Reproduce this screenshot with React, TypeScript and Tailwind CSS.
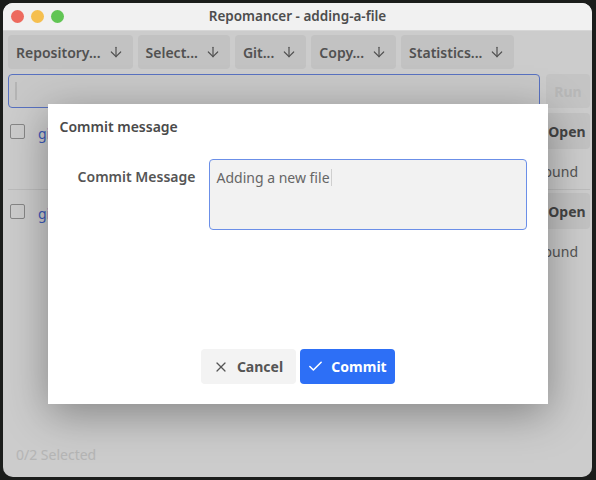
import { ArrowDown, X, Check } from "lucide-react";

const ToolButton = ({ label }: { label: string }) => {
  return (
    <button className="flex h-[34px] items-center gap-[7px] rounded-[4px] bg-[#f3f3f3] pl-[8px] pr-[9px] text-[14px] font-semibold text-[#666]">
      {label}
      <ArrowDown size={16} strokeWidth={1.8} />
    </button>
  );
};

const RepoRow = ({ name, last }: { name: string; last?: boolean }) => {
  return (
    <div className={`flex h-[80px] ${last ? "" : "border-b border-[#ececec]"} ml-[5px]`}>
      <div className="flex flex-1 items-start pt-[13px]">
        <div className="ml-[2px] mt-[1px] h-[15px] w-[15px] rounded-[2px] border border-[#a8a8a8] bg-white" />
        <span className="ml-[13px] text-[14px] text-[#4a70e6]">{name}</span>
      </div>
      <div className="flex flex-col items-end pt-[3px]">
        <button className="h-[36px] w-[46px] rounded-[4px] bg-[#f3f3f3] text-[14px] font-bold text-[#555]">
          Open
        </button>
        <span className="mt-[12px] pr-[12px] text-[14px] text-[#6a6a6a]">Branch not found</span>
      </div>
    </div>
  );
};

export default function App() {
  return (
    <div className="h-[480px] w-[596px] bg-[#1b1d1b] p-[3px] font-['Noto_Sans',sans-serif]">
      <div className="flex h-[474px] w-[589px] flex-col overflow-hidden rounded-[10px] bg-white">
        {/* title bar */}
        <div className="relative flex h-[28px] shrink-0 items-center justify-center border-b border-[#d6d6d6] bg-[#f1f1f1]">
          <div className="absolute left-[8px] top-[7px] flex gap-[7px]">
            <div className="h-[13px] w-[13px] rounded-full bg-[#ed6a5e]" />
            <div className="h-[13px] w-[13px] rounded-full bg-[#f5bf4f]" />
            <div className="h-[13px] w-[13px] rounded-full bg-[#61c554]" />
          </div>
          <span className="text-[13.5px] font-semibold text-[#4d4d4d]">Repomancer - adding-a-file</span>
        </div>

        {/* content */}
        <div className="relative flex flex-1 flex-col">
          <div className="flex gap-[5px] pl-[5px] pt-[4px]">
            <ToolButton label="Repository..." />
            <ToolButton label="Select..." />
            <ToolButton label="Git..." />
            <ToolButton label="Copy..." />
            <ToolButton label="Statistics..." />
          </div>

          <div className="mt-[5px] flex gap-[6px] pl-[5px] pr-[2px]">
            <div className="flex h-[34px] flex-1 items-center rounded-[4px] border border-[#6e8ef0] bg-[#fbfbfb] pl-[6px]">
              <span className="h-[18px] w-[2px] bg-[#e2e2e2]" />
            </div>
            <button className="h-[34px] w-[44px] rounded-[4px] bg-[#f6f6f6] text-[14px] font-bold text-[#e6e6e6]">
              Run
            </button>
          </div>

          <div className="mt-[2px] pr-[2px]">
            <RepoRow name="github.com/example/first-repo" />
            <RepoRow name="github.com/example/second-repo" last />
          </div>

          <div className="mt-auto pb-[12px] pl-[13px] text-[14px] text-[#e3e3e3]">0/2 Selected</div>

          {/* modal overlay */}
          <div className="absolute inset-0 flex items-center justify-center bg-black/20">
            <div className="flex h-[300px] w-[500px] flex-col bg-white shadow-[0_10px_40px_rgba(0,0,0,0.35)]">
              <div className="pl-[12px] pt-[12px] text-[14px] font-semibold text-[#4a4a4a]">Commit message</div>
              <div className="mt-[22px] flex pr-[21px]">
                <div className="w-[161px] pr-[13px] pt-[7px] text-right text-[14px] font-semibold text-[#555]">
                  Commit Message
                </div>
                <div className="h-[71px] flex-1 rounded-[4px] border border-[#6b8fe8] bg-[#f2f2f2] pl-[7px] pt-[6px] text-[14px] text-[#666]">
                  Adding a new file
                  <span className="ml-[1px] inline-block h-[17px] w-[1px] translate-y-[3px] bg-[#cfcfcf]" />
                </div>
              </div>
              <div className="mt-auto flex justify-center gap-[4px] pb-[20px]">
                <button className="flex h-[35px] w-[95px] items-center justify-center gap-[8px] rounded-[4px] bg-[#f3f3f3] text-[14px] font-bold text-[#555]">
                  <X size={16} strokeWidth={1.8} />
                  Cancel
                </button>
                <button className="flex h-[35px] w-[95px] items-center justify-center gap-[7px] rounded-[4px] bg-[#2d6ff6] text-[14px] font-bold text-white">
                  <Check size={17} strokeWidth={2.2} />
                  Commit
                </button>
              </div>
            </div>
          </div>
        </div>
      </div>
    </div>
  );
}
